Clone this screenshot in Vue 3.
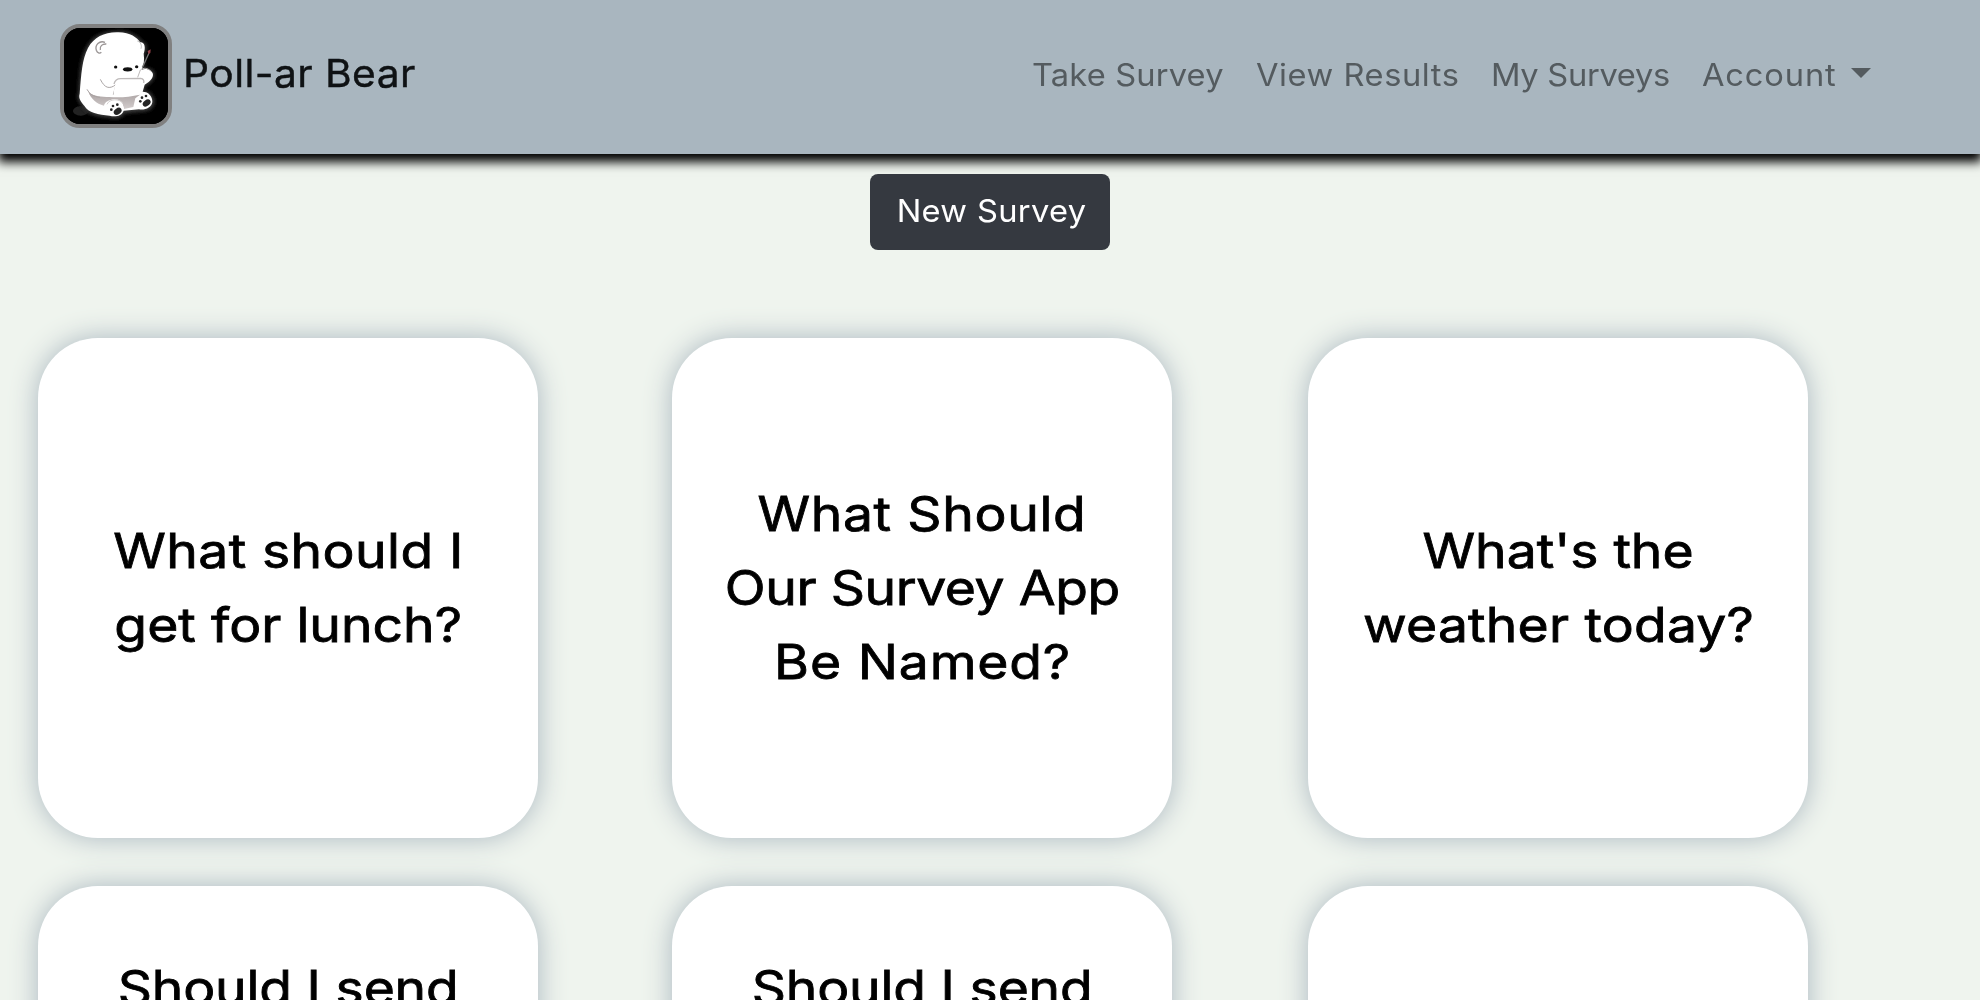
<script setup>
const links = [
  { text: 'Take Survey', spacing: 0.15 },
  { text: 'View Results', spacing: 0.52 },
  { text: 'My Surveys', spacing: -0.28 },
  { text: 'Account', spacing: 0.8, dropdown: true },
]

const surveys = [
  { id: 1, lines: [['What should I', 0.37], ['get for lunch?', 0.03]] },
  { id: 2, lines: [['What Should', 0.58], ['Our Survey App', -0.37], ['Be Named?', 0.76]] },
  { id: 3, lines: [["What's the", 0], ['weather today?', 0.2]] },
  { id: 4, tall: true, lines: [['Should I send', -0.16]] },
  { id: 5, tall: true, lines: [['Should I send', -0.16]] },
  { id: 6, lines: [] },
]
</script>

<template>
  <div class="page">
    <header class="navbar">
      <a class="brand">
        <svg class="logo" viewBox="42 39 312 288" preserveAspectRatio="none" aria-hidden="true">
          <defs>
            <filter id="soft" x="-10%" y="-10%" width="120%" height="120%"><feGaussianBlur stdDeviation="2" /></filter>
            <filter id="glow" x="-10%" y="-10%" width="120%" height="120%"><feGaussianBlur stdDeviation="4" /></filter>
            <linearGradient id="belly" x1="0" y1="0" x2="0" y2="1">
              <stop offset="0" stop-color="#a8a0a0" /><stop offset="1" stop-color="#d2cccc" />
            </linearGradient>
          </defs>
          <rect x="42" y="39" width="312" height="288" fill="#000" />
          <ellipse cx="92" cy="288" rx="23" ry="14" fill="#242424" filter="url(#soft)" />
          <path d="M200 50C238 48 266 66 276 82C290 84 290 106 281 120C284 138 281 152 276 164C292 156 313 166 312 180C312 194 298 205 284 213L279 229C298 228 312 244 311 262C310 280 290 290 270 288L222 293C215 308 195 312 178 306C145 304 112 296 100 276C90 262 81 250 87 234C91 175 92 132 112 96C130 64 160 50 200 50Z" fill="#444" stroke="#262626" stroke-width="9" filter="url(#glow)" />
          <g filter="url(#soft)">
            <path d="M200 52C238 50 262 68 270 82C284 80 288 98 281 116C284 136 281 150 275 164C291 158 310 168 309 180C308 193 296 202 284 209L278 230C296 230 308 245 307 261C305 278 285 286 267 283L221 287C216 303 195 307 179 302C147 300 113 292 104 274C94 260 84 251 89 236C94 176 96 134 114 99C132 66 162 53 200 52Z" fill="#fff" />
            <path d="M115 230C132 245 154 245 178 246C210 249 240 245 270 239L256 250L250 276L222 282C218 258 202 250 184 255C170 257 164 264 162 272C139 266 122 250 115 230Z" fill="url(#belly)" />
            <path d="M111 223C120 238 130 245 150 247" fill="none" stroke="#a9a2a2" stroke-width="3" />
            <path d="M151 193C164 219 177 224 198 209L190 239" fill="none" stroke="#aaa5a5" stroke-width="3" />
            <path d="M205 191L277 189C284 192 282 202 278 214L269 237C245 243 213 242 191 239C192 219 195 203 205 191Z" fill="#fff" />
            <path d="M192 207C195 195 201 191 212 191L272 190C280 191 283 196 281 204" fill="none" stroke="#bebaba" stroke-width="4" />
            <path d="M165 82C148 75 134 91 139 106C142 114 149 117 154 112M169 87C158 86 148 93 151 105" fill="none" stroke="#999494" stroke-width="4" />
            <path d="M262 78C273 82 276 92 273 101" fill="none" stroke="#bbb" stroke-width="3" />
            <ellipse cx="194" cy="278" rx="27" ry="25" fill="#fff" />
            <path d="M171 268C178 251 208 250 219 265" fill="none" stroke="#d4d0d0" stroke-width="3" />
            <path d="M263 187L271 165C280 157 293 159 302 168" fill="none" stroke="#bdb9b9" stroke-width="3" />
          </g>
          <path d="M297 114L283 145L277 157" fill="none" stroke="#777" stroke-width="4" />
          <path d="M293 108L302 103L301 114L295 117Z" fill="#954349" />
          <g fill="#111">
            <ellipse cx="197" cy="156" rx="5" ry="4.5" /><ellipse cx="260" cy="155" rx="5" ry="4.5" />
            <ellipse cx="233" cy="163" rx="14" ry="6.5" />
          </g>
          <g fill="#252525">
            <ellipse cx="203" cy="289" rx="13" ry="9" transform="rotate(-38 203 289)" />
            <ellipse cx="184" cy="284" rx="4" ry="4" /><ellipse cx="189" cy="273" rx="4" ry="4" /><ellipse cx="202" cy="269" rx="4" ry="4" />
            <ellipse cx="290" cy="264" rx="13" ry="9" transform="rotate(-38 290 264)" />
            <ellipse cx="271" cy="259" rx="4" ry="4" /><ellipse cx="276" cy="248" rx="4" ry="4" /><ellipse cx="288" cy="243" rx="4" ry="4" />
          </g>
        </svg>
        <span class="brand-name">Poll-ar Bear</span>
      </a>
      <nav class="links">
        <a v-for="l in links" :key="l.text" class="link">
          <span class="label" :style="{ letterSpacing: l.spacing + 'px' }">{{ l.text }}</span>
          <i v-if="l.dropdown" class="caret"></i>
        </a>
      </nav>
    </header>

    <main>
      <button class="new-survey"><span>New Survey</span></button>
      <section class="grid">
        <article v-for="s in surveys" :key="s.id" class="card" :class="{ tall: s.tall }">
          <span
            v-for="[text, spacing] in s.lines"
            :key="text"
            class="line"
            :style="{ letterSpacing: spacing + 'px', marginRight: -spacing + 'px' }"
          >{{ text }}</span>
        </article>
      </section>
    </main>
  </div>
</template>

<style>
body { margin: 0; background: #eff4ee; }
</style>

<style scoped>
.page {
  box-sizing: border-box;
  width: 100%;
  height: 1000px;
  overflow: hidden;
  background: #eff4ee;
  font-family: Inter, "Open Sans", sans-serif;
}
.navbar {
  box-sizing: border-box;
  height: 154px;
  padding-left: 60px;
  display: flex;
  justify-content: space-between;
  background: #a9b6bf;
  box-shadow: 0 6px 10px 2px #000;
}
.brand { display: flex; margin-top: 24px; height: 104px; }
.logo {
  box-sizing: border-box;
  width: 112px;
  height: 104px;
  border: 4px solid #808080;
  border-radius: 20px;
  background: #000;
}
.brand-name {
  margin-left: 11px;
  margin-top: -1px;
  line-height: 100px;
  font-size: 38.5px;
  letter-spacing: 0.39px;
  color: #0f1214;
  -webkit-text-stroke: 0.4px #0f1214;
  white-space: nowrap;
  transform: scaleX(1.06);
  transform-origin: left;
}
.links {
  display: grid;
  grid-template-columns: 223.5px 235.5px 210.5px 278.5px;
  height: 149px;
  align-items: center;
}
.link {
  display: flex;
  align-items: center;
  font-size: 30.8px;
  line-height: 48px;
  color: #545b5f;
  white-space: nowrap;
}
.label { transform: scaleX(1.06); transform-origin: left; }
.caret {
  margin-left: 23px;
  margin-bottom: 3px;
  border: 10px solid transparent;
  border-top-color: #545b5f;
  border-bottom: 0;
}
.new-survey {
  display: block;
  box-sizing: border-box;
  width: 240px;
  height: 76px;
  margin: 20px auto 88px;
  padding: 0 0 3px 2px;
  border: 0;
  border-radius: 8px;
  background: #353940;
  color: #fff;
  font: 400 30.8px Inter, "Open Sans", sans-serif;
  letter-spacing: 0.31px;
}
.new-survey span { display: inline-block; transform: scaleX(1.06); }
.grid {
  display: grid;
  grid-template-columns: 634px 636px 500px;
  row-gap: 48px;
  padding-left: 38px;
}
.card {
  box-sizing: border-box;
  width: 500px;
  height: 500px;
  display: flex;
  flex-direction: column;
  align-items: center;
  justify-content: center;
  background: #fff;
  border-radius: 60px;
  box-shadow: 0 0 28px #a9b6bf;
}
.card.tall { justify-content: flex-start; padding-top: 65px; }
.line {
  font-size: 47.7px;
  line-height: 74px;
  color: #000;
  -webkit-text-stroke: 0.8px #000;
  white-space: nowrap;
  transform: scaleX(1.12);
}
</style>
